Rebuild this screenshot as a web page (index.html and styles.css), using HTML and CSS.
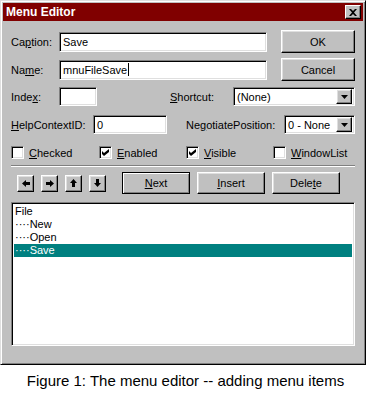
FILE: index.html
```html
<!DOCTYPE html>
<html>
<head>
<meta charset="utf-8">
<link rel="stylesheet" href="styles.css">
</head>
<body>
<div class="window">
  <div class="titlebar">
    <span class="title">Menu Editor</span>
    <span class="close"><svg width="8" height="7" viewBox="0 0 8 7"><path d="M0 0h2l2 2 2-2h2L5 3.5 8 7H6L4 5 2 7H0l3-3.5z" fill="#000"/></svg></span>
  </div>
  <div class="body">
    <div class="row r1">
      <span class="lbl w48">Ca<u>p</u>tion:</span>
      <div class="field sunken wcap">Save</div>
      <div class="btn big">OK</div>
    </div>
    <div class="row r2">
      <span class="lbl w48">Na<u>m</u>e:</span>
      <div class="field sunken wcap">mnuFileSave<span class="caret"></span></div>
      <div class="btn big">Cancel</div>
    </div>
    <div class="row r3">
      <span class="lbl w48">Inde<u>x</u>:</span>
      <div class="field sunken windex"></div>
      <span class="lbl shortcut"><u>S</u>hortcut:</span>
      <div class="combo sunken wshort"><span class="ctext">(None)</span><span class="btn dd"><svg width="7" height="4" viewBox="0 0 7 4"><path d="M0 0h7L3.5 4z" fill="#000"/></svg></span></div>
    </div>
    <div class="row r4">
      <span class="lbl whelp"><u>H</u>elpContextID:</span>
      <div class="field sunken whelpf">0</div>
      <span class="lbl negot">Ne<u>g</u>otiatePosition:</span>
      <div class="combo sunken wneg"><span class="ctext">0 - None</span><span class="btn dd"><svg width="7" height="4" viewBox="0 0 7 4"><path d="M0 0h7L3.5 4z" fill="#000"/></svg></span></div>
    </div>
    <div class="checks">
      <div class="chk"><span class="box sunken"></span><span><u>C</u>hecked</span></div>
      <div class="chk"><span class="box sunken"><svg width="7" height="7" viewBox="0 0 7 7"><path d="M0 2l2 2 5-4v3L2 7 0 5z" fill="#000"/></svg></span><span><u>E</u>nabled</span></div>
      <div class="chk"><span class="box sunken"><svg width="7" height="7" viewBox="0 0 7 7"><path d="M0 2l2 2 5-4v3L2 7 0 5z" fill="#000"/></svg></span><span><u>V</u>isible</span></div>
      <div class="chk"><span class="box sunken"></span><span><u>W</u>indowList</span></div>
    </div>
    <div class="sep"></div>
    <div class="row r6">
      <div class="arrows">
        <div class="btn abtn"><svg width="8" height="7" viewBox="0 0 8 7"><path d="M0 3.5L4 0v2h4v3H4v2z" fill="#000"/></svg></div>
        <div class="btn abtn"><svg width="8" height="7" viewBox="0 0 8 7"><path d="M8 3.5L4 0v2H0v3h4v2z" fill="#000"/></svg></div>
        <div class="btn abtn"><svg width="7" height="8" viewBox="0 0 7 8"><path d="M3.5 0L7 4H5v4H2V4H0z" fill="#000"/></svg></div>
        <div class="btn abtn"><svg width="7" height="8" viewBox="0 0 7 8"><path d="M3.5 8L7 4H5V0H2v4H0z" fill="#000"/></svg></div>
      </div>
      <div class="btns">
        <div class="btn mid def"><span><u>N</u>ext</span></div>
        <div class="btn mid"><span><u>I</u>nsert</span></div>
        <div class="btn mid"><span>Dele<u>t</u>e</span></div>
      </div>
    </div>
    <div class="list sunken">
      <div class="item">File</div>
      <div class="item">····New</div>
      <div class="item">····Open</div>
      <div class="item sel">····Save</div>
    </div>
  </div>
</div>
<div class="caption">Figure 1: The menu editor -- adding menu items</div>
</body>
</html>
```
FILE: styles.css
```css
* { box-sizing: border-box; }
body {
  margin: 0;
  background: #fff;
  font-family: "Liberation Sans", Arial, sans-serif;
  font-size: 11px;
  color: #000;
}
u { text-decoration: underline; text-underline-offset: 1px; }
.window {
  width: 366px;
  height: 365px;
  background: #c0c0c0;
  border: 1px solid;
  border-color: #dfdfdf #000 #000 #dfdfdf;
  box-shadow: inset 1px 1px #fff, inset -1px -1px #808080;
  padding: 2px;
}
.titlebar {
  height: 18px;
  background: #800000;
  display: flex;
  align-items: center;
  justify-content: space-between;
  padding: 0 2px 0 3px;
}
.title { color: #fff; font-weight: bold; font-size: 12px; }
.close {
  width: 16px;
  height: 14px;
  background: #c0c0c0;
  display: flex;
  align-items: center;
  justify-content: center;
  border: 1px solid;
  border-color: #fff #000 #000 #fff;
  box-shadow: inset -1px -1px #808080;
}
.body { padding: 9px 8px 0 8px; }
.row { display: flex; align-items: center; }
.r1 { height: 23px; }
.r2 { height: 23px; margin-top: 5px; }
.r3 { height: 19px; margin-top: 6px; }
.r4 { height: 19px; margin-top: 9px; }
.lbl { white-space: nowrap; }
.w48 { width: 48px; flex: none; }
.whelp { width: 82px; flex: none; }
.shortcut { margin-left: 73px; width: 63px; flex: none; }
.negot { margin-left: 19px; width: 98px; flex: none; }
.sunken {
  background: #fff;
  border: 1px solid;
  border-color: #808080 #fff #fff #808080;
  box-shadow: inset 1px 1px #000, inset -1px -1px #dfdfdf;
}
.field {
  height: 20px;
  padding: 0 3px;
  display: flex;
  align-items: center;
  flex: none;
}
.wcap { width: 208px; }
.windex { width: 38px; height: 19px; }
.whelpf { width: 74px; height: 19px; }
.caret { width: 1px; height: 13px; background: #000; margin-left: 1px; }
.btn {
  display: flex;
  align-items: center;
  justify-content: center;
  background: #c0c0c0;
  border: 1px solid;
  border-color: #fff #000 #000 #fff;
  box-shadow: inset -1px -1px #808080, inset 1px 1px #dfdfdf;
}
.big { width: 74px; height: 23px; margin-left: auto; flex: none; }
.combo {
  height: 19px;
  padding: 2px;
  display: flex;
  align-items: center;
  flex: none;
}
.wshort { width: 122px; }
.wneg { width: 71px; }
.ctext { flex: 1; padding-left: 1px; }
.dd { width: 16px; height: 15px; flex: none; }
.checks {
  display: grid;
  grid-template-columns: 88px 87px 87px 1fr;
  margin-top: 12px;
  height: 13px;
}
.chk { display: flex; align-items: center; gap: 5px; }
.box {
  width: 13px;
  height: 13px;
  display: flex;
  align-items: center;
  justify-content: center;
  flex: none;
}
.sep {
  margin-top: 6px;
  height: 2px;
  border-top: 1px solid #808080;
  border-bottom: 1px solid #fff;
}
.r6 { height: 22px; margin-top: 5px; }
.arrows { display: flex; gap: 7px; margin-left: 6px; }
.abtn { width: 17px; height: 17px; }
.btns { display: flex; gap: 7px; margin-left: 16px; }
.mid { width: 68px; height: 22px; }
.def { border-color: #000; box-shadow: inset 1px 1px #fff, inset -1px -1px #808080; }
.list {
  margin-top: 8px;
  height: 144px;
  padding: 2px;
}
.item { height: 13px; line-height: 13px; padding-left: 1px; white-space: pre; }
.item.sel { background: #008080; color: #fff; }
.caption {
  text-align: center;
  font-size: 15px;
  margin-top: 7px;
  padding-left: 5px;
  font-family: "Liberation Sans", Arial, sans-serif;
}
```
